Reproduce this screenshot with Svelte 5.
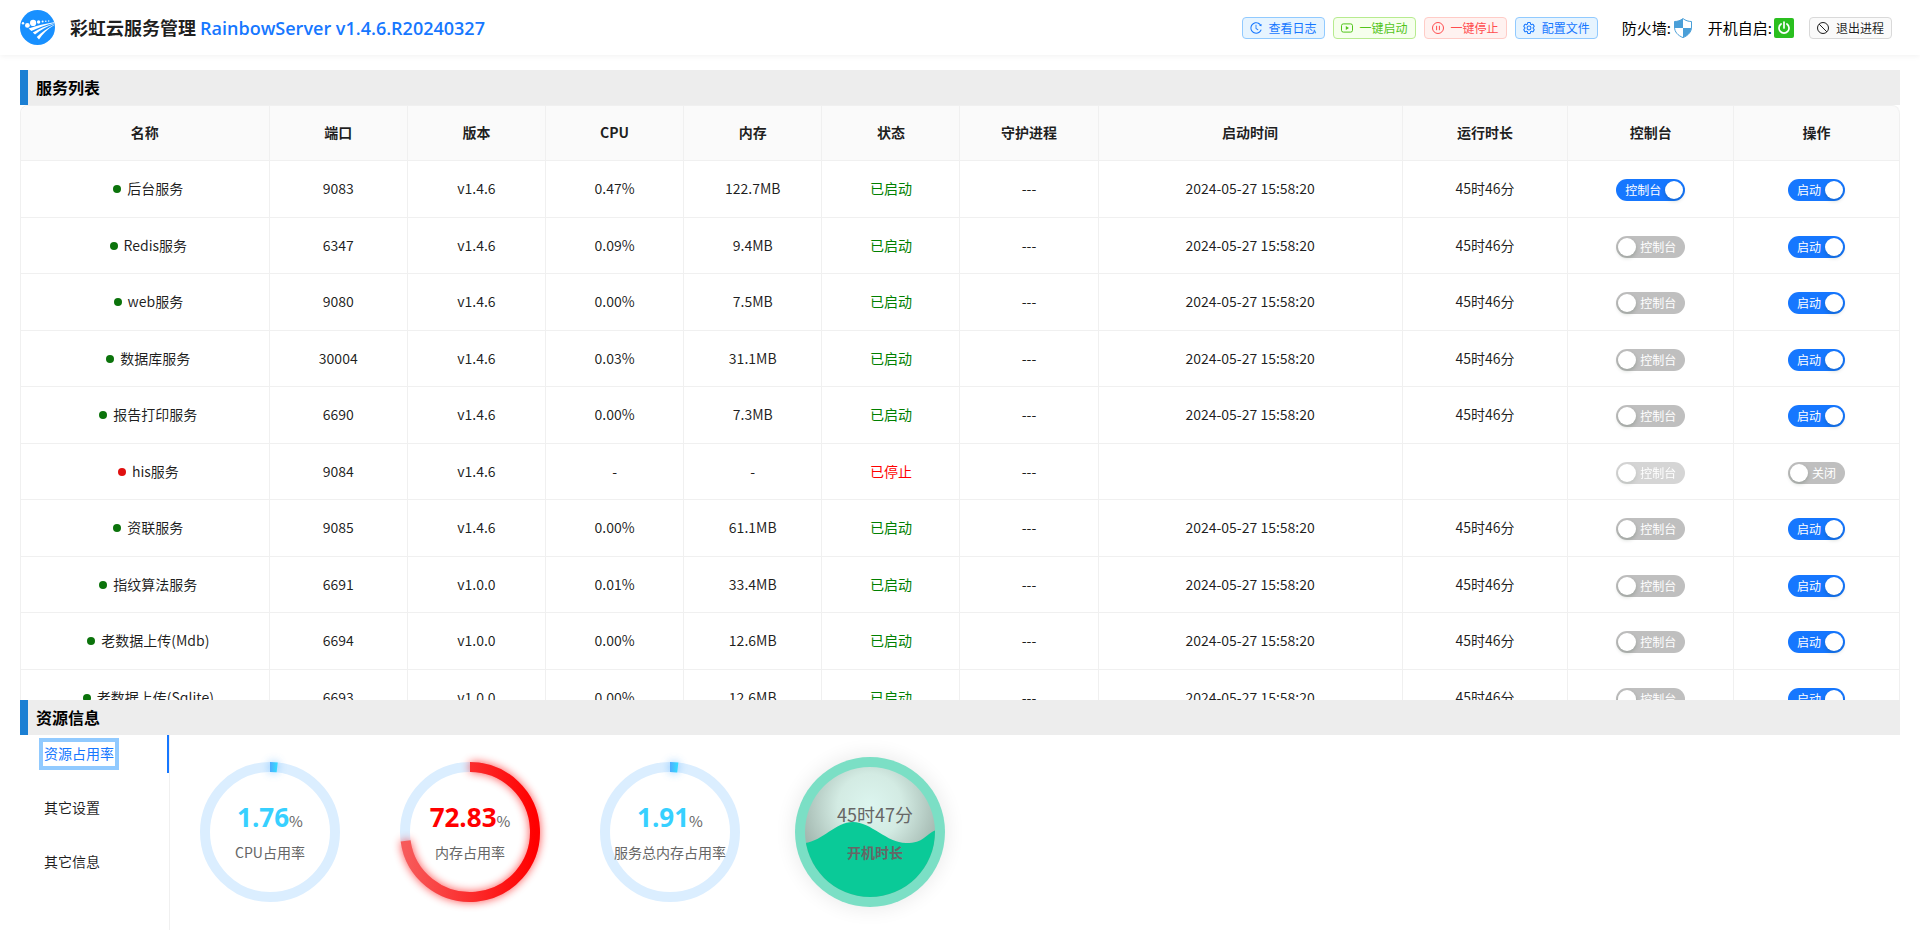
<script>
	const columns = [
		{ title: '名称', width: 180 },
		{ title: '端口', width: 100 },
		{ title: '版本', width: 100 },
		{ title: 'CPU', width: 100 },
		{ title: '内存', width: 100 },
		{ title: '状态', width: 100 },
		{ title: '守护进程', width: 100 },
		{ title: '启动时间', width: 220 },
		{ title: '运行时长', width: 120 },
		{ title: '控制台', width: 120 },
		{ title: '操作', width: 120 }
	];
	const totalWidth = columns.reduce((sum, c) => sum + c.width, 0);

	const started = '2024-05-27 15:58:20';
	const uptime = '45时46分';

	let services = [
		{ name: '后台服务', port: 9083, version: 'v1.4.6', cpu: '0.47%', mem: '122.7MB', running: true, terminal: true },
		{ name: 'Redis服务', port: 6347, version: 'v1.4.6', cpu: '0.09%', mem: '9.4MB', running: true, terminal: false },
		{ name: 'web服务', port: 9080, version: 'v1.4.6', cpu: '0.00%', mem: '7.5MB', running: true, terminal: false },
		{ name: '数据库服务', port: 30004, version: 'v1.4.6', cpu: '0.03%', mem: '31.1MB', running: true, terminal: false },
		{ name: '报告打印服务', port: 6690, version: 'v1.4.6', cpu: '0.00%', mem: '7.3MB', running: true, terminal: false },
		{ name: 'his服务', port: 9084, version: 'v1.4.6', cpu: '-', mem: '-', running: false, terminal: false },
		{ name: '资联服务', port: 9085, version: 'v1.4.6', cpu: '0.00%', mem: '61.1MB', running: true, terminal: false },
		{ name: '指纹算法服务', port: 6691, version: 'v1.0.0', cpu: '0.01%', mem: '33.4MB', running: true, terminal: false },
		{ name: '老数据上传(Mdb)', port: 6694, version: 'v1.0.0', cpu: '0.00%', mem: '12.6MB', running: true, terminal: false },
		{ name: '老数据上传(Sqlite)', port: 6693, version: 'v1.0.0', cpu: '0.00%', mem: '12.6MB', running: true, terminal: false }
	];

	const tabs = ['资源占用率', '其它设置', '其它信息'];
	let activeTab = 0;

	const gauges = [
		{ label: 'CPU占用率', value: 1.76, danger: false },
		{ label: '内存占用率', value: 72.83, danger: true },
		{ label: '服务总内存占用率', value: 1.91, danger: false }
	];

	// clockwise arc that starts at 12 o'clock
	function arc(percent) {
		const cx = 100;
		const cy = 97;
		const r = 65;
		const a = (percent / 100) * Math.PI * 2;
		const x = cx + r * Math.sin(a);
		const y = cy - r * Math.cos(a);
		return `M${cx} ${cy - r}A${r} ${r} 0 ${percent > 50 ? 1 : 0} 1 ${x} ${y}`;
	}
</script>

<svelte:head>
	<title>彩虹云服务管理</title>
</svelte:head>

<div class="page">
	<header>
		<svg class="logo" viewBox="0 0 35 35" aria-hidden="true">
			<circle cx="17.5" cy="17.5" r="17.5" fill="#1890ff" />
			<g fill="#fff">
				<circle cx="3" cy="13.2" r="1.2" />
				<circle cx="7.4" cy="15.4" r="2.4" />
				<circle cx="13.1" cy="12.9" r="3.1" />
				<circle cx="18.6" cy="12" r="1.7" />
				<circle cx="22.6" cy="11.6" r="1" />
				<circle cx="25.8" cy="11.3" r="0.8" />
				<circle cx="28.7" cy="11" r="0.7" />
				<path d="M34 12.2C25 13.6 17 15.6 8.6 18.6L11.4 21C18 17.6 26 14.6 34 12.9Z" />
				<path d="M34 13.5C26 15.8 18.500 19 12.800 22.400L15 24.400C20.500 20.200 27 16.600 34 14.100Z" />
				<path d="M34 14.700C27.500 18 21 22.500 16.800 27L19 29.600C22.500 23.800 27.500 19 34 15.200Z" />
			</g>
		</svg>
		<h1>彩虹云服务管理 <span>RainbowServer v1.4.6.R20240327</span></h1>

		<div class="actions">
			<button class="tag blue">
				<svg viewBox="64 64 896 896" fill="currentColor" aria-hidden="true"><path d="M536.1 273H488c-4.4 0-8 3.6-8 8v275.3c0 2.6 1.2 5 3.3 6.5l165.3 120.7c3.6 2.6 8.6 1.9 11.2-1.7l28.6-39c2.7-3.7 1.9-8.7-1.7-11.2L544.1 528.5V281c0-4.4-3.6-8-8-8zm219.8 75.2l156.8 38.3c5 1.2 9.9-2.6 9.9-7.7l.8-161.5c0-6.7-7.7-10.5-12.9-6.3L752.9 334.1a8 8 0 003 14.1zm167.7 301.1l-56.7-19.5a8 8 0 00-10.1 4.8c-1.9 5.1-3.9 10.1-6 15.1-17.8 42.1-43.3 80-75.9 112.5a353 353 0 01-112.5 75.9 352.18 352.18 0 01-137.7 27.8c-47.8 0-94.1-9.3-137.7-27.8a353 353 0 01-112.5-75.9c-32.5-32.5-58-70.4-75.9-112.5A353.44 353.44 0 01171 512c0-47.8 9.3-94.2 27.8-137.8 17.8-42.1 43.3-80 75.9-112.5a353 353 0 01112.5-75.9C430.6 167.3 477 158 524.8 158s94.1 9.3 137.7 27.8A353 353 0 01775 261.7c10.2 10.3 19.8 21 28.6 32.3l59.8-46.8C784.7 146.6 662.2 81.9 524.6 82 285 82.1 92.6 276.7 95 516.4 97.4 751.9 288.9 942 524.8 942c185.5 0 343.5-117.6 403.7-282.3 1.5-4.2-.7-8.9-4.9-10.4z" /></svg>
				查看日志
			</button>
			<button class="tag green">
				<svg viewBox="0 0 12 12" fill="none" stroke="currentColor" aria-hidden="true"><rect x="0.5" y="1.9" width="11" height="8.2" rx="1.8" /><path d="M4.8 4.1v3.8L8 6z" fill="currentColor" stroke="none" /></svg>
				一键启动
			</button>
			<button class="tag red">
				<svg viewBox="0 0 12 12" fill="none" stroke="currentColor" aria-hidden="true"><circle cx="6" cy="6" r="5.5" /><path d="M4.6 3.8v4.4M7.4 3.8v4.4" /></svg>
				一键停止
			</button>
			<button class="tag blue">
				<svg viewBox="2 2 20 20" fill="none" stroke="currentColor" stroke-width="1.7" aria-hidden="true"><path d="M9.594 3.94c.09-.542.56-.94 1.11-.94h2.593c.55 0 1.02.398 1.11.94l.213 1.281c.063.374.313.686.645.87.074.04.147.083.22.127.325.196.72.257 1.075.124l1.217-.456a1.125 1.125 0 0 1 1.37.49l1.296 2.247a1.125 1.125 0 0 1-.26 1.431l-1.003.827c-.293.241-.438.613-.43.992a7.723 7.723 0 0 1 0 .255c-.008.378.137.75.43.991l1.004.827c.424.35.534.955.26 1.43l-1.298 2.247a1.125 1.125 0 0 1-1.369.491l-1.217-.456c-.355-.133-.75-.072-1.076.124a6.47 6.47 0 0 1-.22.128c-.331.183-.581.495-.644.869l-.213 1.281c-.09.543-.56.94-1.11.94h-2.594c-.55 0-1.019-.398-1.11-.94l-.213-1.281c-.062-.374-.312-.686-.644-.87a6.52 6.52 0 0 1-.22-.127c-.325-.196-.72-.257-1.076-.124l-1.217.456a1.125 1.125 0 0 1-1.369-.49l-1.297-2.247a1.125 1.125 0 0 1 .26-1.431l1.004-.827c.292-.24.437-.613.43-.991a6.932 6.932 0 0 1 0-.255c.007-.38-.138-.751-.43-.992l-1.004-.827a1.125 1.125 0 0 1-.26-1.43l1.297-2.247a1.125 1.125 0 0 1 1.37-.491l1.216.456c.356.133.751.072 1.076-.124.072-.044.146-.086.22-.128.332-.183.582-.495.644-.869l.214-1.28Z" /><circle cx="12" cy="12" r="3.2" /></svg>
				配置文件
			</button>

			<div class="state firewall">
				防火墙:
				<svg viewBox="0 0 20 20" aria-hidden="true">
					<path d="M10 .6C7.5 2.6 4.5 3.5 1.5 3.5V9C1.5 14 5 17.6 10 19.6 15 17.6 18.5 14 18.5 9V3.5C15.5 3.5 12.5 2.6 10 .6Z" fill="#fff" stroke="#4a9fd8" />
					<path d="M10 .6C7.5 2.6 4.5 3.5 1.5 3.5V10H10ZM10 10H18.4C18 14.5 14.6 17.8 10 19.6Z" fill="#4a9fd8" />
				</svg>
			</div>
			<div class="state">
				开机自启:
				<svg viewBox="0 0 20 20" aria-hidden="true">
					<rect width="20" height="20" rx="2" fill="#2abf1f" />
					<path d="M7.1 6A5 5 0 1 0 12.9 6M10 4V10" fill="none" stroke="#fff" stroke-width="1.7" stroke-linecap="round" />
				</svg>
			</div>

			<button class="tag">
				<svg viewBox="0 0 12 12" fill="none" stroke="currentColor" aria-hidden="true"><circle cx="6" cy="6" r="5.5" /><path d="M2.2 2.2l7.6 7.6" /></svg>
				退出进程
			</button>
		</div>
	</header>

	<main>
		<section class="services">
			<h2>服务列表</h2>
			<div class="table-wrap">
				<table>
					<colgroup>
						{#each columns as col}
							<col style="width: {(col.width / totalWidth) * 100}%" />
						{/each}
					</colgroup>
					<thead>
						<tr>
							{#each columns as col}
								<th>{col.title}</th>
							{/each}
						</tr>
					</thead>
					<tbody>
						{#each services as s}
							<tr>
								<td class="name"><i class="dot" class:off={!s.running}></i>{s.name}</td>
								<td>{s.port}</td>
								<td>{s.version}</td>
								<td>{s.cpu}</td>
								<td>{s.mem}</td>
								<td class={s.running ? 'ok' : 'stopped'}>{s.running ? '已启动' : '已停止'}</td>
								<td>---</td>
								<td>{s.running ? started : ''}</td>
								<td>{s.running ? uptime : ''}</td>
								<td class="control">
									<button
										class="switch"
										class:checked={s.terminal}
										role="switch"
										aria-checked={s.terminal}
										disabled={!s.running}
										on:click={() => (s.terminal = !s.terminal)}
									>控制台</button>
								</td>
								<td class="control">
									<button
										class="switch"
										class:checked={s.running}
										role="switch"
										aria-checked={s.running}
										on:click={() => (s.running = !s.running)}
									>{s.running ? '启动' : '关闭'}</button>
								</td>
							</tr>
						{/each}
					</tbody>
				</table>
			</div>
		</section>

		<section class="resources">
			<h2>资源信息</h2>
			<div class="panel">
				<nav>
					{#each tabs as tab, i}
						<button class:active={activeTab === i} on:click={() => (activeTab = i)}>
							<span>{tab}</span>
						</button>
					{/each}
				</nav>

				<div class="gauges">
					{#each gauges as g, i}
						<svg viewBox="0 0 200 195" role="img" aria-label={g.label}>
							<defs>
								<linearGradient id="bar{i}">
									<stop offset="0" stop-color={g.danger ? '#f75a5a' : '#4facfe'} />
									<stop offset="1" stop-color={g.danger ? '#ff0000' : '#35dcff'} />
								</linearGradient>
								<filter id="glow{i}" filterUnits="userSpaceOnUse" x="0" y="0" width="200" height="195">
									<feGaussianBlur stdDeviation="5" />
								</filter>
							</defs>
							<circle cx="100" cy="97" r="65" fill="none" stroke="#dbeeff" stroke-width="10" />
							<path d={arc(g.value)} fill="none" stroke={g.danger ? '#ff0000' : '#4facfe'} stroke-width="10" opacity="0.7" filter="url(#glow{i})" />
							<path d={arc(g.value)} fill="none" stroke="url(#bar{i})" stroke-width="10" />
							<text x="100" y="92" class="value" class:danger={g.danger}>{g.value}<tspan class="unit">%</tspan></text>
							<text x="100" y="123" class="label">{g.label}</text>
						</svg>
					{/each}

					<svg viewBox="0 0 200 195" role="img" aria-label="开机时长">
						<defs>
							<radialGradient id="glass" cx="0.5" cy="0.3" r="0.55">
								<stop offset="0" stop-color="#dcf5ef" />
								<stop offset="0.45" stop-color="#d3ebe3" />
								<stop offset="1" stop-color="#a3b8b0" />
							</radialGradient>
							<filter id="halo" filterUnits="userSpaceOnUse" x="0" y="0" width="200" height="195">
								<feGaussianBlur stdDeviation="10" />
							</filter>
							<clipPath id="bowl"><circle cx="100" cy="97" r="65" /></clipPath>
						</defs>
						<circle cx="100" cy="97" r="77" fill="#000" opacity="0.08" filter="url(#halo)" />
						<circle cx="100" cy="97" r="75" fill="#7bdfc5" />
						<circle cx="100" cy="97" r="65" fill="url(#glass)" />
						<path d="M34 108C52 107 65 87 83 87S117 108 136 108 155 99 166 95V165H34Z" fill="#0aca98" clip-path="url(#bowl)" />
						<text x="105" y="87" class="uptime">45时47分</text>
						<text x="105" y="123" class="label strong">开机时长</text>
					</svg>
				</div>
			</div>
		</section>
	</main>
</div>

<style>
	:global(body) {
		background: #fff;
	}

	.page {
		display: flex;
		flex-direction: column;
		height: 100vh;
		font-family: 'Noto Sans CJK SC', sans-serif;
		font-size: 14px;
		line-height: 22px;
		color: rgba(0, 0, 0, 0.88);
	}

	button {
		font-family: inherit;
		cursor: pointer;
	}

	header {
		display: flex;
		align-items: center;
		height: 55px;
		flex: none;
		padding: 0 28px 0 20px;
		box-shadow: 0 1px 6px rgba(0, 0, 0, 0.06);
	}

	.logo {
		width: 35px;
		height: 35px;
		margin-right: 15px;
	}

	h1 {
		margin: 0;
		font-size: 18px;
		font-weight: 700;
		white-space: nowrap;
	}

	h1 span {
		color: #1677ff;
		font-family: 'Open Sans', sans-serif;
		font-weight: 600;
	}

	.actions {
		display: flex;
		align-items: center;
		gap: 8px;
		margin-left: auto;
	}

	.tag {
		display: flex;
		align-items: center;
		gap: 7px;
		height: 22px;
		padding: 0 7px;
		font-size: 12px;
		line-height: 20px;
		white-space: nowrap;
		color: rgba(0, 0, 0, 0.88);
		background: #fafafa;
		border: 1px solid #d9d9d9;
		border-radius: 4px;
	}

	.tag svg {
		width: 12px;
		height: 12px;
	}

	.tag.blue {
		color: #1677ff;
		background: #e6f4ff;
		border-color: #91caff;
	}

	.tag.green {
		color: #52c41a;
		background: #f6ffed;
		border-color: #b7eb8f;
	}

	.tag.red {
		color: #ff4d4f;
		background: #fff2f0;
		border-color: #ffccc7;
	}

	.state {
		display: flex;
		align-items: center;
		gap: 2px;
		margin-right: 7px;
		font-size: 15px;
		color: #000;
		white-space: nowrap;
	}

	.firewall {
		margin-left: 16px;
	}

	.state svg {
		width: 20px;
		height: 20px;
	}

	main {
		display: flex;
		flex-direction: column;
		flex: 1;
		min-height: 0;
		padding: 15px 20px;
	}

	.services {
		display: flex;
		flex-direction: column;
		flex: 1;
		min-height: 0;
	}

	h2 {
		flex: none;
		margin: 0;
		padding-left: 8px;
		font-size: 16px;
		line-height: 35px;
		font-weight: 700;
		color: #000;
		background: #ededed;
		border-left: 8px solid #1b7fd3;
	}

	.table-wrap {
		flex: 1;
		min-height: 0;
		overflow: auto;
		scrollbar-width: none;
	}

	table {
		width: 100%;
		table-layout: fixed;
		border-collapse: separate;
		border-spacing: 0;
		border: solid #f0f0f0;
		border-width: 1px 0 0 1px;
		border-radius: 8px 8px 0 0;
	}

	th,
	td {
		box-sizing: border-box;
		height: 57px;
		padding: 0 0 2px;
		text-align: center;
		border: solid #f0f0f0;
		border-width: 0 1px 1px 0;
	}

	th {
		height: 55px;
		font-weight: 700;
		background: #fafafa;
	}

	th:first-child {
		border-top-left-radius: 8px;
	}

	th:last-child {
		border-top-right-radius: 8px;
	}

	tr:nth-child(even) td {
		height: 56px;
	}

	.name {
		padding-left: 7px;
	}

	.control {
		padding: 0;
	}

	.dot {
		display: inline-block;
		width: 8px;
		height: 8px;
		margin-right: 6px;
		vertical-align: 1px;
		border-radius: 50%;
		background: #0b730b;
	}

	.dot.off {
		background: #e01010;
	}

	.ok {
		color: #008000;
	}

	.stopped {
		color: #ff0000;
	}

	.switch {
		position: relative;
		height: 22px;
		padding: 0 9px 0 24px;
		font-size: 12px;
		line-height: 22px;
		vertical-align: middle;
		color: #fff;
		background: #bfbfbf;
		border: 0;
		border-radius: 11px;
	}

	.switch::before {
		content: '';
		position: absolute;
		top: 2px;
		left: 2px;
		width: 18px;
		height: 18px;
		border-radius: 50%;
		background: #fff;
		box-shadow: 0 2px 4px rgba(0, 35, 11, 0.2);
	}

	.switch.checked {
		padding: 0 24px 0 9px;
		background: #1677ff;
	}

	.switch.checked::before {
		left: auto;
		right: 2px;
	}

	.switch:disabled {
		opacity: 0.65;
		cursor: not-allowed;
	}

	.resources {
		flex: none;
	}

	.panel {
		display: flex;
		height: 195px;
	}

	nav {
		display: flex;
		flex-direction: column;
		gap: 16px;
		width: 149px;
		border-right: 1px solid #f0f0f0;
	}

	nav button {
		padding: 8px 24px;
		font-size: 14px;
		line-height: 22px;
		text-align: left;
		color: inherit;
		background: none;
		border: 0;
	}

	nav button.active {
		color: #1677ff;
		border-right: 2px solid #1677ff;
	}

	nav span {
		display: block;
		width: max-content;
		line-height: 20px;
		padding-bottom: 2px;
	}

	nav .active span {
		outline: 4px solid #91caff;
		outline-offset: 1px;
	}

	.gauges {
		display: flex;
	}

	.gauges svg {
		width: 200px;
		height: 195px;
	}

	text {
		fill: #666;
		font-size: 14px;
		text-anchor: middle;
	}

	.value {
		fill: #37d0ff;
		font-family: 'Open Sans', sans-serif;
		font-size: 26px;
		font-weight: 700;
	}

	.value.danger {
		fill: #ff0000;
	}

	.unit {
		fill: #666;
		font-family: 'Noto Sans CJK SC', sans-serif;
		font-size: 15px;
		font-weight: 400;
	}

	.uptime {
		font-size: 18px;
	}

	.strong {
		font-weight: 700;
	}
</style>
